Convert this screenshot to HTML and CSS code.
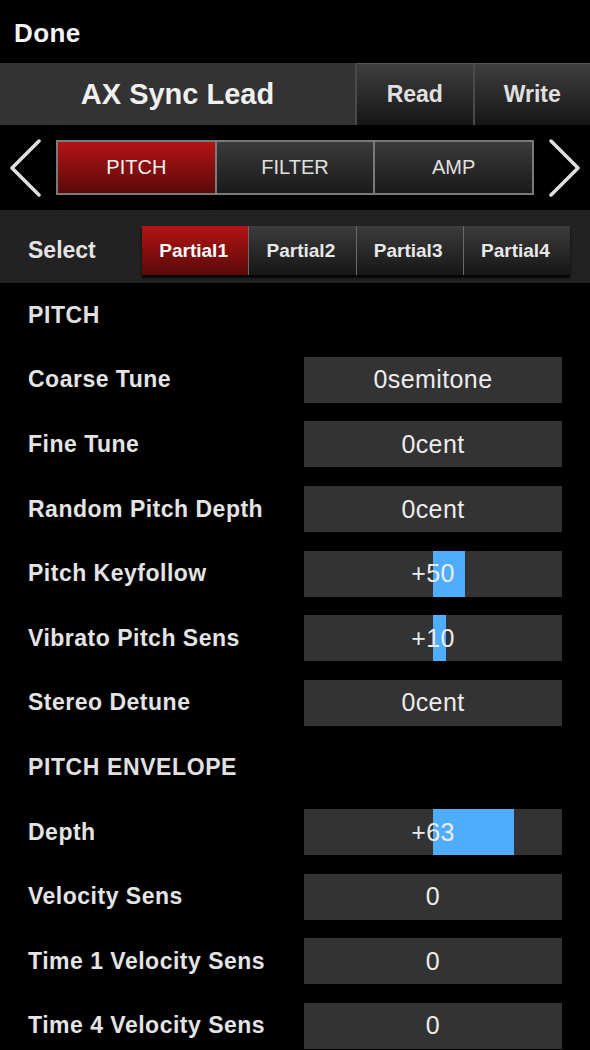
FILE: index.html
```html
<!DOCTYPE html>
<html>
<head>
<meta charset="utf-8">
<link rel="stylesheet" href="styles.css">
</head>
<body>
<div class="app">
  <div class="topbar"><span class="done">Done</span></div>
  <div class="titlebar">
    <div class="title">AX Sync Lead</div>
    <div class="tbtn">Read</div>
    <div class="tbtn">Write</div>
  </div>
  <div class="tabrow">
    <svg class="arrow" width="34" height="58" viewBox="0 0 34 58"><polyline points="30,2 3,29 30,56" fill="none" stroke="#e0e0e0" stroke-width="3.5" stroke-linecap="round" stroke-linejoin="round"/></svg>
    <div class="tabs">
      <div class="tab active">PITCH</div>
      <div class="tab">FILTER</div>
      <div class="tab">AMP</div>
    </div>
    <svg class="arrow" width="34" height="58" viewBox="0 0 34 58"><polyline points="4,2 31,29 4,56" fill="none" stroke="#e0e0e0" stroke-width="3.5" stroke-linecap="round" stroke-linejoin="round"/></svg>
  </div>
  <div class="selectrow">
    <div class="selectlabel">Select</div>
    <div class="partials">
      <div class="partial active">Partial1</div>
      <div class="partial">Partial2</div>
      <div class="partial">Partial3</div>
      <div class="partial">Partial4</div>
    </div>
  </div>
  <div class="list">
    <div class="row"><div class="head">PITCH</div></div>
    <div class="row"><div class="label">Coarse Tune</div><div class="box"><span class="val">0semitone</span></div></div>
    <div class="row"><div class="label">Fine Tune</div><div class="box"><span class="val">0cent</span></div></div>
    <div class="row"><div class="label">Random Pitch Depth</div><div class="box"><span class="val">0cent</span></div></div>
    <div class="row"><div class="label">Pitch Keyfollow</div><div class="box"><div class="bar" style="width:32px"></div><span class="val">+50</span></div></div>
    <div class="row"><div class="label">Vibrato Pitch Sens</div><div class="box"><div class="bar" style="width:13px"></div><span class="val">+10</span></div></div>
    <div class="row"><div class="label">Stereo Detune</div><div class="box"><span class="val">0cent</span></div></div>
    <div class="row"><div class="head">PITCH ENVELOPE</div></div>
    <div class="row"><div class="label">Depth</div><div class="box"><div class="bar" style="width:81px"></div><span class="val">+63</span></div></div>
    <div class="row"><div class="label">Velocity Sens</div><div class="box"><span class="val">0</span></div></div>
    <div class="row"><div class="label">Time 1 Velocity Sens</div><div class="box"><span class="val">0</span></div></div>
    <div class="row"><div class="label">Time 4 Velocity Sens</div><div class="box"><span class="val">0</span></div></div>
  </div>
</div>
</body>
</html>
```

FILE: styles.css
```css
* { box-sizing: border-box; }
html, body { margin: 0; padding: 0; background: #000; }
body { font-family: "Liberation Sans", Arial, Helvetica, sans-serif; color: #e8e8e8; }
.app { width: 590px; height: 1050px; overflow: hidden; background: #000; }

.topbar { height: 63px; display: flex; align-items: center; padding-left: 14px; padding-top: 4px; }
.done { font-size: 26px; font-weight: bold; color: #f4f4f4; letter-spacing: 0.4px; }

.titlebar { height: 62px; display: flex; background: #333; }
.title { width: 355px; display: flex; align-items: center; justify-content: center; font-size: 29px; font-weight: bold; color: #f0f0f0; }
.tbtn { flex: 1; display: flex; align-items: center; justify-content: center; font-size: 23px; font-weight: bold; color: #e0e0e0;
  background: linear-gradient(#3e3e3e, #161616); border-left: 2px solid #4a4a4a; border-top: 1px solid #555; }

.tabrow { height: 85px; display: flex; align-items: center; padding: 0 9px; justify-content: space-between; }
.arrow { display: block; }
.tabs { width: 478px; height: 55px; display: flex; border: 2px solid #7a7a7a; background: #7a7a7a; gap: 2px; }
.tab { flex: 1; display: flex; align-items: center; justify-content: center; font-size: 20px; color: #e0e0e0;
  background: linear-gradient(#3a3a3a, #1a1a1a); }
.tab.active { background: linear-gradient(#b31414, #5a0a0a); color: #f2f2f2; }

.selectrow { height: 73px; display: flex; align-items: flex-start; background: #222; padding-top: 16px; }
.selectlabel { width: 142px; height: 49px; padding-left: 28px; display: flex; align-items: center; font-size: 23px; font-weight: bold; color: #e4e4e4; }
.partials { width: 428px; height: 49px; display: flex; gap: 1px; background: #6a6a6a; box-shadow: 0 3px 2px rgba(0,0,0,0.9); }
.partial { flex: 1; display: flex; align-items: center; justify-content: center; font-size: 19px; font-weight: bold; color: #e8e8e8;
  background: linear-gradient(#3c3c3c, #161616); padding-right: 3px; }
.partial.active { background: linear-gradient(#b31414, #5a0a0a); color: #fafafa; }

.list { display: flex; flex-direction: column; }
.row { height: 64.6px; display: flex; align-items: center; padding-left: 28px; flex: none; }
.head { font-size: 23px; font-weight: bold; color: #e0e0e0; letter-spacing: 0.6px; }
.label { font-size: 23px; font-weight: bold; color: #e4e4e4; letter-spacing: 0.5px; }
.box { position: relative; margin-left: auto; margin-right: 28px; width: 258px; height: 46px; background: #333;
  display: flex; align-items: center; justify-content: center; }
.val { position: relative; font-size: 25px; color: #ececec; letter-spacing: 0.4px; }
.bar { position: absolute; left: 129px; top: 0; bottom: 0; background: #4fadff; }
```
